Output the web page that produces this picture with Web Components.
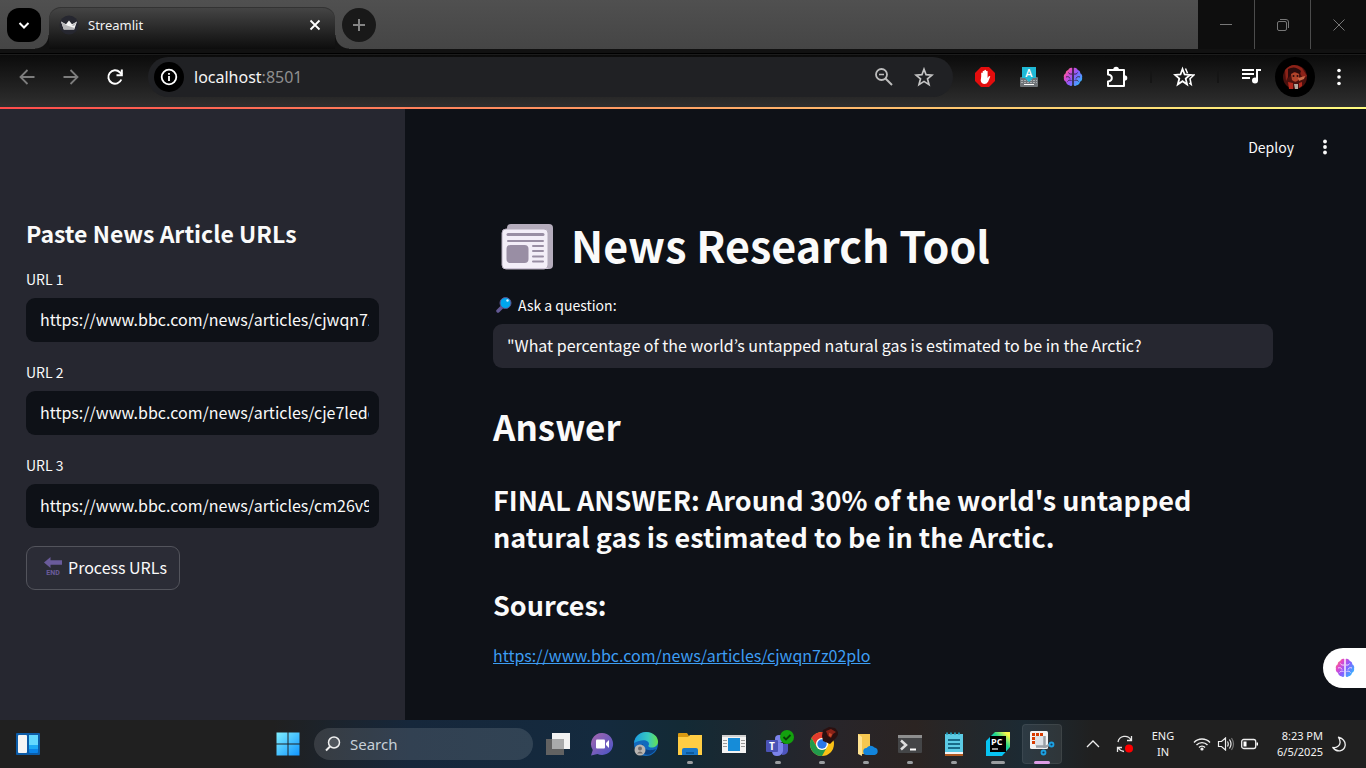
<!DOCTYPE html>
<html lang="en">
<head>
<meta charset="utf-8">
<title>Streamlit</title>
<style>
  html, body { height: 100%; margin: 0; }
  body { background: #0e1117; overflow: hidden; font-family: "Noto Sans CJK KR", sans-serif; color: #fafafa; }
</style>
</head>
<body>
<desktop-screen>
  <browser-tabs slot="tabs" label="Streamlit"></browser-tabs>
  <browser-toolbar slot="toolbar"></browser-toolbar>
  <side-panel slot="side" heading="Paste News Article URLs">
    <text-field label="URL 1" value="https://www.bbc.com/news/articles/cjwqn7z02plo"></text-field>
    <text-field label="URL 2" value="https://www.bbc.com/news/articles/cje7ledqz2qo"></text-field>
    <text-field label="URL 3" value="https://www.bbc.com/news/articles/cm26v9x3lkyo"></text-field>
    <action-button>Process URLs</action-button>
  </side-panel>
  <news-page slot="main">
    <text-field tone="light" icon="lens" label="Ask a question:" value="&quot;What percentage of the world’s untapped natural gas is estimated to be in the Arctic?"></text-field>
  </news-page>
  <task-bar slot="taskbar"></task-bar>
</desktop-screen>

<script>
const brain = `<defs><linearGradient id="b" x1="0" y1="0" x2="1" y2=".7"><stop offset="0" stop-color="#ff9a3c"/><stop offset=".3" stop-color="#e447c8"/><stop offset=".6" stop-color="#8a5cff"/><stop offset="1" stop-color="#35b4ff"/></linearGradient></defs>
<path fill="url(#b)" d="M9.300 1C7.300.300 5.800 1.500 5.300 3 3.500 3.200 2.500 4.800 2.800 6.300 1 7.200.400 9 .900 10.500 .500 12.500 1.500 14.200 3 14.800 3.200 17 5 18.200 6.300 18.200 7.500 19.500 9.300 19.200 9.300 17.500ZM10.700 1C12.700.300 14.200 1.500 14.700 3 16.500 3.200 17.500 4.800 17.200 6.300 19 7.200 19.600 9 19.100 10.500 19.500 12.500 18.500 14.200 17 14.800 16.800 17 15 18.200 13.700 18.200 12.500 19.500 10.700 19.200 10.700 17.500Z"/>
<path fill="none" stroke="var(--brain-line,#3a2a4c)" stroke-width="1" d="M5.500 5.500c.5 1.500 2 1.800 3.500 1.500M3 10c2-.8 3.500 0 4 1.500M4.500 14.500c1-1.500 2.500-1.500 4-1M14.500 5.500c-.5 1.500-2 1.800-3.500 1.500M17 10c-2-.8-3.500 0-4 1.500M15.500 14.500c-1-1.500-2.500-1.500-4-1"/>`;

/* name: [width, height, viewBox, markup] */
const ICONS = {
  chevronDown: [12, 12, '0 0 12 12', '<path fill="none" stroke="#fff" stroke-width="2" d="M1.500 4 6 8.500 10.500 4"/>'],
  crown: [20, 20, '0 0 20 20', '<circle cx="10" cy="10" r="9.500" fill="#262730"/><path fill="#f4f4f4" d="M2 6.500 7 9.200 10 5.500 13 9.200 18 6.500 15.200 14.500H4.800Z"/><path fill="#b5b5b8" d="M2 6.500 8 10.500 15.500 13 15.200 14.500H4.800ZM18 6.500 12.500 10.500 15 11Z"/>'],
  close: [12, 12, '0 0 12 12', '<path stroke="#fff" stroke-width="1.800" d="m1.500 1.500 9 9m0-9-9 9"/>'],
  plus: [14, 14, '0 0 14 14', '<path stroke="#848484" stroke-width="2" d="M7 1v12M1 7h12"/>'],
  winMin: [12, 12, '0 0 12 12', '<path stroke="#777" d="M0 5.500h12"/>'],
  winMax: [14, 14, '0 0 14 14', '<rect x="1.500" y="3.500" width="9" height="9" rx="1.500" fill="none" stroke="#777"/><path fill="none" stroke="#777" d="M4 1.500h6a2.500 2.500 0 0 1 2.500 2.500v6"/>'],
  winClose: [12, 12, '0 0 12 12', '<path stroke="#777" d="m.500.500 11 11m0-11-11 11"/>'],
  back: [18, 18, '0 0 18 18', '<path fill="none" stroke="#7d7d7d" stroke-width="1.800" d="M16.500 9H3M9.500 2 2.500 9l7 7"/>'],
  forward: [18, 18, '0 0 18 18', '<path fill="none" stroke="#7d7d7d" stroke-width="1.800" d="M1.500 9H15M8.500 2l7 7-7 7"/>'],
  reload: [18, 18, '0 0 18 18', '<path fill="none" stroke="#fff" stroke-width="2" d="M15.300 11.500A6.700 6.700 0 1 1 13.800 4.300L16 6.500"/><path fill="none" stroke="#fff" stroke-width="2" d="M15.800 1.500V7.200H10.500"/>'],
  info: [18, 18, '0 0 18 18', '<circle cx="9" cy="9" r="7.300" fill="none" stroke="#fff" stroke-width="1.800"/><path stroke="#fff" stroke-width="1.800" d="M9 8v5M9 5v1.800"/>'],
  zoomOut: [20, 20, '0 0 20 20', '<circle cx="7.500" cy="7.500" r="5.500" fill="none" stroke="#bdbdbd" stroke-width="1.800"/><path stroke="#bdbdbd" stroke-width="2" d="m11.500 11.500 6.500 6.500"/><path stroke="#bdbdbd" stroke-width="1.500" d="M5 7.500h5"/>'],
  star: [20, 20, '0 0 20 20', '<path fill="none" stroke="#c4c4c4" stroke-width="1.700" d="m10 2.200 2.100 5.500 5.900.400-4.500 3.700 1.500 5.800-5-3.200-5 3.200 1.500-5.800L2 8.100l5.900-.400Z"/>'],
  block: [20, 20, '0 0 20 20', '<path fill="#e40d0d" d="M6 0h8l6 6v8l-6 6H6l-6-6V6Z"/><path fill="#fff" d="M6.200 9.500V6q.800-1 1.500 0V4.300q.800-1 1.600 0V3.300q.900-.9 1.700 0v1q.800-1 1.600 0V11l1.200-1.800q1-.7 1.500.2l-2.200 5.300q-1.300 2.300-3.600 2.300-3.300-.3-3.800-3.500Z"/>'],
  keyboard: [20, 20, '0 0 20 20', '<rect x="1" y="10" width="18" height="10" rx="1" fill="#6f7478"/><path stroke="#a9adb0" stroke-dasharray="2 1" d="M2 13.500h16M2 15.500h16"/><path stroke="#fff" d="M5 17.500h10"/><path fill="#1fb9d5" d="M3 0h14v11h-3l-4 4-4-4H3Z"/><text x="10" y="10" text-anchor="middle" font-family="Roboto" font-size="11" font-weight="500" fill="#fff">A</text>'],
  brain: [20, 20, '0 0 20 20', brain],
  puzzle: [22, 22, '0 0 22 22', '<path fill="none" stroke="#fff" stroke-width="2" stroke-linejoin="round" d="M2 4h16v16H2v-4.500q3.800-.5 3.800-3.500T2 8.500Z"/><path fill="#fff" d="M7.300 3.500a2.800 2.800 0 0 1 5.600 0ZM18.500 9.200a2.800 2.800 0 0 1 0 5.600Z"/>'],
  stars: [22, 22, '0 0 22 22', '<path fill="none" stroke="#fff" stroke-width="1.800" d="m9.500 3 2.100 5.500 5.400.400-4.300 3.700 1.400 5.800-4.600-3.200-4.700 3.200 1.500-5.800L2 8.900l5.500-.400Z"/><path fill="none" stroke="#fff" stroke-width="1.500" d="m12.500 2.500 2 4.700M17 9h4l-4 3.700 1.200 5.800-2-1.500"/>'],
  media: [22, 20, '0 0 22 20', '<path stroke="#fff" stroke-width="2" d="M2 3h12M2 7h12M2 11h8"/><path fill="none" stroke="#fff" stroke-width="2" d="M17 14V3h4"/><circle cx="15" cy="13.500" r="3" fill="#fff"/>'],
  avatar: [24, 26, '0 0 24 26', '<circle cx="12" cy="13" r="12" fill="#4a100d"/><path fill="#8c2218" d="M2 6q8-9 17-2l5 8-4 3-3-6H7l-4 8Z"/><path fill="#2a0b0c" d="M5 5q7-4 13 2l-1 3-6-2-6 6Z"/><path fill="#b0432a" d="M8 10q4-3 8 0v5q-3 5-7 1Z"/><path fill="#c96a48" d="m15 14 7-2-1 3-5 2Z"/><path fill="#b3aaa0" d="M11 20h4v5h-3Z"/><path fill="#b3281c" d="m5 18 5 1v6H6ZM16 19l3-1v4l-3 2Z"/><circle cx="10.500" cy="12" r="1" fill="#2a0b0c"/><circle cx="14.500" cy="12" r="1" fill="#2a0b0c"/>'],
  dots: [6, 18, '0 0 6 18', '<g fill="#fff"><circle cx="3" cy="2.500" r="1.800"/><circle cx="3" cy="9" r="1.800"/><circle cx="3" cy="15.500" r="1.800"/></g>'],
  menu: [6, 16, '0 0 6 16', '<g fill="#fafafa"><circle cx="3" cy="2.500" r="1.900"/><circle cx="3" cy="8" r="1.900"/><circle cx="3" cy="13.500" r="1.900"/></g>'],
  end: [18, 20, '0 0 18 20', '<path fill="#6a5b9b" d="M0 5.500 6.500 0v3.200H18v4.500H6.500V11Z"/><text x="9" y="18" text-anchor="middle" font-family="Roboto" font-size="7" font-weight="700" fill="#6a5b9b">END</text>'],
  lens: [16, 16, '0 0 16 16', '<path stroke="#635994" stroke-width="3.500" stroke-linecap="round" d="m2 14 3.500-3.500"/><circle cx="9.500" cy="6" r="5.500" fill="#00a6ed" stroke="#5c5390" stroke-width="1"/><circle cx="11.500" cy="3.500" r="1.200" fill="#d5f3ff"/>'],
  paper: [52, 46, '0 0 52 46', '<rect x="6" y="0" width="46" height="45" rx="4" fill="#b4acbc"/><rect x="1" y="5" width="46" height="40" rx="4" fill="#f3eef8" stroke="#b4acbc"/><path stroke="#cdc4d6" d="M3 44.500h44"/><g stroke="#998ea4" stroke-linecap="round"><path stroke-width="3" d="M7 10.500h35"/><path stroke-width="2" d="M7 17h35M32 22h10M32 27h10M32 32.500h10M32 37.500h10"/></g><rect x="5.500" y="21" width="22" height="18" rx="4" fill="#998ea4"/>'],
  widgets: [24, 22, '0 0 24 22', '<rect width="24" height="22" rx="1" fill="#0c5ca8"/><rect x="2" y="2" width="9" height="18" rx="1" fill="#f5f5f5"/><rect x="13" y="2" width="9" height="18" rx="1" fill="#0a84ea"/><path fill="#63d8ff" d="M13 2h9v10h-9Z"/><path fill="#1ca9f5" d="M13 12h9v4h-9Z"/>'],
  start: [24, 24, '0 0 24 24', '<defs><linearGradient id="s" x1="0" y1="0" x2="1" y2="1"><stop stop-color="#80efff"/><stop offset="1" stop-color="#1095ff"/></linearGradient></defs><path fill="url(#s)" d="M.500.500h11v11h-11ZM12.500.500h11v11h-11ZM.500 12.500h11v11h-11ZM12.500 12.500h11v11h-11Z"/>'],
  search: [16, 16, '0 0 16 16', '<circle cx="9" cy="6.500" r="5.500" fill="#ffffff22" stroke="#f0f0f0" stroke-width="1.500"/><path stroke="#f0f0f0" stroke-width="2" d="M5 10.500 1 14.500"/>'],
  taskview: [24, 22, '0 0 24 22', '<rect y="6" width="18" height="16" fill="#626262"/><rect x="6" y="0" width="18" height="16" fill="#f2f2f2"/><rect x="6" y="6" width="12" height="10" fill="#a9aaab"/>'],
  chat: [24, 24, '0 0 24 24', '<defs><linearGradient id="c" x1="0" y1="0" x2="1" y2="1"><stop stop-color="#a665ad"/><stop offset="1" stop-color="#4654c8"/></linearGradient></defs><path fill="url(#c)" d="M12 1a11 11 0 1 1-4.500 21L1 23.500l1.800-5.500A11 11 0 0 1 12 1Z"/><rect x="6" y="7.500" width="9" height="9" rx="1" fill="#fff"/><path fill="#fff" d="m16 11 3-3v8l-3-3Z"/>'],
  edge: [24, 24, '0 0 24 24', '<defs><linearGradient id="e"><stop stop-color="#1a9be0"/><stop offset=".6" stop-color="#38c9c0"/><stop offset="1" stop-color="#66e34d"/></linearGradient></defs><circle cx="12" cy="12" r="12" fill="#1269bd"/><path fill="url(#e)" d="M0 11C1 4 6 0 12 0c7 0 12 4.500 12 9.500 0 4-3 6-6.500 6-2.500 0-4-1-2.500-3 .5-4-6-6.500-15-1.500Z"/><path fill="#0b3f80" d="M9 12c0 5 5 8 13 5-3 5-8 7-12 5-4-3-4-8-1-10Z"/><circle cx="6" cy="18" r="5.500" fill="#b9b5b2"/><circle cx="6" cy="16.500" r="2" fill="#726d6b"/><path fill="#726d6b" d="M3 21.500q3-4 6 0Z"/>'],
  folder: [24, 22, '0 0 24 22', '<path fill="#d99a12" d="M0 1q0-1 1-1h8l2 3h12v6H0Z"/><path fill="#ffcd44" d="M0 4h10l2-2h12v20H0Z"/><path fill="#1a78c8" d="M4 22v-5q0-2 2-2h12q2 0 2 2v5Z"/><path stroke="#0c5a9c" stroke-width="2" d="M8 20h8"/>'],
  window: [24, 18, '0 0 24 18', '<rect width="24" height="18" fill="#f3f3f3"/><path fill="#d0d0d0" d="M0 0h24v2H0Z"/><path stroke="#999" d="M1 5.500h4M1 8.500h4M1 11.500h4M19 5.500h4M19 8.500h4M19 11.500h4"/><rect x="6" y="3" width="12" height="13" fill="#168cd8"/>'],
  teams: [32, 32, '0 0 32 32', '<circle cx="17" cy="11" r="4" fill="#7b83eb"/><path fill="#4d55bd" d="M18 16h8v7q-1 4-6 4Z"/><path fill="#7b83eb" d="M10 15h11v8q-1 5-6 5t-5-5Z"/><rect x="4" y="12" width="12" height="12" rx="1" fill="#4a52b5"/><text x="10" y="22" text-anchor="middle" font-family="Open Sans" font-size="10" font-weight="700" fill="#fff">T</text><circle cx="25" cy="9" r="7" fill="#13a10e"/><path fill="none" stroke="#073f06" stroke-width="1.800" d="m21.500 9 2.500 2.500 4.500-4.500"/>'],
  chrome: [32, 34, '0 0 32 34', '<circle cx="16" cy="17" r="12" fill="#fbc116"/><path fill="#e33b2e" d="M5.600 11A12 12 0 0 1 26.400 11H16A6 6 0 0 0 10.500 19Z"/><path fill="#229a4c" d="M5.600 11A12 12 0 0 0 16 29l5-9A6 6 0 0 1 10.800 20Z"/><circle cx="16" cy="17" r="6" fill="#fff"/><circle cx="16" cy="17" r="4.700" fill="#2a77e8"/><path fill="#2a1010" d="m16 9 1-6 6-3 6 1 4 5-3 5-6 6-7-3Z"/><path fill="#8c2217" d="m20 4 5-2 5 3-3 2-2 4-3-2Z"/><path fill="#ca4a2a" d="m23 6 3 1-1 3-2-1Z"/>'],
  onedrive: [24, 24, '0 0 24 24', '<path fill="#f6c750" d="M4 2h12v20H4Z"/><path fill="#ffe291" d="m4 2 4 3v19l-4-2Z"/><path fill="#1285dc" d="M13 23a3.500 3.500 0 0 1-.500-7 5 5 0 0 1 8-.500 3.800 3.800 0 0 1 0 7.500Z"/>'],
  terminal: [24, 18, '0 0 24 18', '<rect width="24" height="18" rx="1" fill="#444547"/><path fill="#8e8e8e" d="M0 0h24v3H0Z"/><path fill="none" stroke="#ddd" stroke-width="2.500" d="m3 5.500 5 4.500-5 4.500"/><path stroke="#fff" stroke-width="2" d="M12 14.500h6"/>'],
  notepad: [18, 24, '0 0 18 24', '<path fill="#5ccbe5" d="M0 2h18v18H0Z"/><path stroke="#1d8fa9" stroke-width="2" stroke-dasharray="2 2" d="M1 1.500h16"/><path stroke="#186a88" stroke-width="2" d="M3 8h12M3 12h12M3 16h12"/><path fill="#f3f3f3" d="M0 20h18v2H0Z"/><path fill="#b25a20" d="M0 22h18v2H0Z"/>'],
  pycharm: [24, 24, '0 0 24 24', '<defs><linearGradient id="p" x1="0" y1="1" x2="1" y2="0"><stop offset=".45" stop-color="#07c3f2"/><stop offset=".65" stop-color="#21d789"/><stop offset=".9" stop-color="#fcf84a"/></linearGradient></defs><path fill="url(#p)" d="M9 0h15v15l-8 9H0V9Z"/><rect x="4" y="4" width="16" height="16" fill="#000"/><text x="5" y="13" font-family="Open Sans" font-size="9" font-weight="700" fill="#fff">PC</text><path stroke="#fff" stroke-width="1.200" d="M6 17h6"/>'],
  snip: [26, 26, '0 0 26 26', '<rect x="1" y="0" width="18" height="18" rx="1.500" fill="#f3f3f3"/><path fill="none" stroke="#d83b01" stroke-width="3" stroke-dasharray="3 1" d="M4.500 13V3.500H14"/><rect x="6" y="5" width="10" height="10" fill="#dde2e7"/><path fill="none" stroke="#9aa0a6" stroke-width="2.500" d="M15.500 5v12M7 15.500h10l4-2"/><g fill="#17395a" stroke="#1ba1e2" stroke-width="1.800"><circle cx="22.500" cy="13.500" r="2"/><circle cx="14.500" cy="21.500" r="2"/></g>'],
  up: [14, 8, '0 0 14 8', '<path fill="none" stroke="#eee" stroke-width="1.300" d="m1 7 6-6 6 6"/>'],
  sync: [18, 18, '0 0 18 18', '<path fill="none" stroke="#e8e8e8" stroke-width="1.300" d="M2 7A7 7 0 0 1 15 5M15.500 1v4.500H11M1.500 17v-4.500H6M2 12.500q2 3.500 6 4"/><circle cx="13" cy="13.500" r="4" fill="#f00"/>'],
  wifi: [18, 14, '0 0 18 14', '<g fill="none" stroke="#eee" stroke-width="1.400"><path d="M1 5.500a11 11 0 0 1 16 0M3.500 8a7.500 7.500 0 0 1 11 0M6 10.500a4 4 0 0 1 6 0"/></g><circle cx="9" cy="12" r="1.600" fill="#eee"/>'],
  volume: [18, 14, '0 0 18 14', '<path fill="none" stroke="#eee" stroke-width="1.200" d="M1.500 4.500h3l4-3.500v12l-4-3.500h-3ZM10.500 4.500q1.500 2.500 0 5M12.500 2.500q3 4.500 0 9"/><path fill="none" stroke="#777" stroke-width="1.200" d="M14.500 1q4 6 0 12"/>'],
  battery: [18, 12, '0 0 18 12', '<rect x=".700" y="1.500" width="14" height="9" rx="2" fill="none" stroke="#eee" stroke-width="1.300"/><path fill="#fff" d="M2.500 3.500h3v5h-3ZM15.500 4.500h1.500v3h-1.500Z"/>'],
  moon: [14, 16, '0 0 14 16', '<path fill="none" stroke="#eee" stroke-width="1.300" stroke-linejoin="round" d="M6.500 1.200Q10 7.500 6 10.200 3.500 12 .800 11.500 3.500 15.300 8 14.800q4.500-1 5.200-5.500.3-6-6.700-8.100Z"/>']
};

const define = (name, html, setup) => {
  const template = document.createElement('template');
  template.innerHTML = html;
  customElements.define(name, class extends HTMLElement {
    connectedCallback() {
      if (this.shadowRoot) return;
      this.attachShadow({ mode: 'open' }).append(template.content.cloneNode(true));
      if (setup) setup(this, this.shadowRoot);
    }
  });
};

define('ui-icon', `<style>:host{display:inline-flex;flex:none;align-items:center;justify-content:center}svg{display:block}</style>`, (host, root) => {
  const [w, h, box, art] = ICONS[host.getAttribute('name')];
  root.innerHTML += `<svg width="${w}" height="${h}" viewBox="${box}" aria-hidden="true">${art}</svg>`;
});

define('desktop-screen', `<style>
  :host{display:grid;grid-template-rows:auto auto 1fr auto;height:100vh;position:relative}
  .page{display:grid;grid-template-columns:405px 1fr;min-height:0;position:relative}
  .assist{position:absolute;right:0;bottom:32px;width:43px;height:40px;border:0;border-radius:20px 0 0 20px;background:#fff;display:flex;align-items:center;justify-content:center;padding:0;--brain-line:#f6d8ff}
</style>
<slot name="tabs"></slot><slot name="toolbar"></slot>
<div class="page"><slot name="side"></slot><slot name="main"></slot>
<button class="assist" aria-label="Assistant"><ui-icon name="brain"></ui-icon></button></div>
<slot name="taskbar"></slot>`);

define('browser-tabs', `<style>
  :host{display:flex;height:49px;background:linear-gradient(#505050,#454545);font:13px "Noto Sans","Open Sans",sans-serif}
  button{border:0;padding:0;display:flex;align-items:center;justify-content:center}
  .list{width:34px;height:34px;border-radius:12px;background:#000;margin:8px 8px 0 7px}
  .tab{position:relative;display:flex;align-items:center;box-sizing:border-box;width:286px;height:42px;margin-top:7px;padding:0 12px 6px 10px;border-radius:12px 12px 0 0;background:linear-gradient(#464646,#0d0d0d);box-shadow:inset 0 1px #333}
  .tab::before,.tab::after{content:"";position:absolute;bottom:0;width:14px;height:14px}
  .tab::before{left:-14px;background:radial-gradient(circle at 0 0,transparent 13px,#111 14px)}
  .tab::after{right:-14px;background:radial-gradient(circle at 100% 0,transparent 13px,#111 14px)}
  .title{flex:1;margin-left:9px;color:#f2f2f2}
  .tab button{width:16px;height:16px;background:none}
  .new{width:34px;height:34px;border-radius:50%;background:#191919;margin:8px 0 0 7px}
  .win{display:flex;margin-left:auto}
  .win button{box-sizing:border-box;width:56px;background:#0e0e0e}
  .win button+button{border-left:1px solid #4c4c4c}
</style>
<button class="list" aria-label="Search tabs"><ui-icon name="chevronDown"></ui-icon></button>
<div class="tab"><ui-icon name="crown"></ui-icon><span class="title"></span><button aria-label="Close tab"><ui-icon name="close"></ui-icon></button></div>
<button class="new" aria-label="New tab"><ui-icon name="plus"></ui-icon></button>
<div class="win"><button aria-label="Minimize"><ui-icon name="winMin"></ui-icon></button><button aria-label="Restore"><ui-icon name="winMax"></ui-icon></button><button aria-label="Close"><ui-icon name="winClose"></ui-icon></button></div>`,
(host, root) => { root.querySelector('.title').textContent = host.getAttribute('label'); });

define('browser-toolbar', `<style>
  :host{display:block;font:16px "Noto Sans","Open Sans",sans-serif}
  .edge{height:6px;background:linear-gradient(#111 0 4px,#000 4px 5px,#1c1c1c 5px)}
  .bar{display:flex;align-items:center;height:52px;padding:0 5px 8px 5px;box-sizing:border-box;background:linear-gradient(#0b0b0b,#2f2f2f)}
  .line{height:2px;background:linear-gradient(90deg,#ff4b4b,#fffd80)}
  button{flex:none;width:44px;height:40px;border:0;padding:0;background:none;display:flex;align-items:center;justify-content:center}
  .omni{flex:1;display:flex;align-items:center;height:40px;margin:0 10px 0 11px;padding:0 9px 0 6px;border-radius:20px;background:#202124;box-sizing:border-box}
  .omni button{width:40px}
  .omni .info{width:30px;height:30px;border-radius:50%;background:#000}
  .url{flex:1;margin-left:10px;color:#f5f5f5}
  .url span{color:#8f8f8f}
  .sep{flex:none;width:2px;height:12px;margin:0 10px 0 11px;background:#151515}
  .me ui-icon{width:40px;height:40px;border-radius:50%;background:#000}
</style>
<div class="edge"></div>
<div class="bar">
  <button aria-label="Back"><ui-icon name="back"></ui-icon></button><button aria-label="Forward"><ui-icon name="forward"></ui-icon></button><button aria-label="Reload"><ui-icon name="reload"></ui-icon></button>
  <div class="omni"><button class="info" aria-label="Site information"><ui-icon name="info"></ui-icon></button><div class="url">localhost<span>:8501</span></div>
    <button aria-label="Zoom"><ui-icon name="zoomOut"></ui-icon></button><button aria-label="Bookmark"><ui-icon name="star"></ui-icon></button></div>
  <button aria-label="Ad blocker"><ui-icon name="block"></ui-icon></button><button aria-label="Keyboard"><ui-icon name="keyboard"></ui-icon></button><button aria-label="Brain"><ui-icon name="brain"></ui-icon></button><button aria-label="Extensions"><ui-icon name="puzzle"></ui-icon></button>
  <i class="sep"></i><button aria-label="Favourites"><ui-icon name="stars"></ui-icon></button><i class="sep"></i>
  <button aria-label="Media"><ui-icon name="media"></ui-icon></button><button class="me" aria-label="Profile"><ui-icon name="avatar"></ui-icon></button><button aria-label="Menu"><ui-icon name="dots"></ui-icon></button>
</div>
<div class="line"></div>`);

define('text-field', `<style>
  :host{display:block}
  label{display:flex;align-items:center;gap:6px;height:24px;margin-bottom:7px;font-size:14px;line-height:24px;color:#fafafa}
  input{display:block;box-sizing:border-box;width:100%;height:44px;border:0;border-radius:9px;padding:0 10px 2px 14px;background:#0e1117;color:#fafafa;font:16px "Noto Sans CJK KR",sans-serif;outline:0}
  :host([tone=light]) input{background:#262730}
  :host([tone=light]) label{padding-left:3px}
</style>
<label for="f"><span></span></label><input id="f" type="text">`,
(host, root) => {
  const label = root.querySelector('label');
  root.querySelector('span').textContent = host.getAttribute('label');
  root.querySelector('input').value = host.getAttribute('value');
  if (host.hasAttribute('icon')) {
    const icon = document.createElement('ui-icon');
    icon.setAttribute('name', host.getAttribute('icon'));
    label.prepend(icon);
  }
});

define('action-button', `<style>
  :host{display:block}
  button{display:flex;align-items:center;gap:6px;height:44px;padding:0 12px 2px 17px;border:1px solid #53545c;border-radius:9px;background:#2b2c36;color:#fafafa;font:16px "Noto Sans CJK KR",sans-serif}
</style><button><ui-icon name="end"></ui-icon><slot></slot></button>`);

define('side-panel', `<style>
  :host{display:flex;flex-direction:column;gap:18px;box-sizing:border-box;padding:109px 26px 0;background:#262730}
  h2{margin:0;font-size:23px;line-height:31px;font-weight:600}
</style><h2></h2><slot></slot>`,
(host, root) => { root.querySelector('h2').textContent = host.getAttribute('heading'); });

define('news-page', `<style>
  :host{display:block;position:relative;padding:106px 93px 0 88px;background:#0e1117;min-width:0}
  header{position:absolute;top:22px;right:24px;display:flex;align-items:center;gap:14px;height:32px}
  header button{display:flex;align-items:center;justify-content:center;border:0;padding:0;background:none;color:#fafafa;font:14px/30px "Noto Sans CJK KR",sans-serif}
  header button+button{width:34px;height:32px}
  h1{display:flex;align-items:center;gap:18px;margin:0 0 20px;padding-left:8px;font-size:43px;line-height:58px;font-weight:700}
  h1 ui-icon{padding-top:6px}
  h2{margin:34px 0 31px;font-size:35px;line-height:48px;font-weight:600}
  h3{margin:0 0 31px;font-size:27px;line-height:37px;font-weight:600}
  h3.src{margin-bottom:18px}
  p{margin:0;font-size:16px;line-height:28px}
  a{color:#3d9df3}
</style>
<header><button>Deploy</button><button aria-label="Main menu"><ui-icon name="menu"></ui-icon></button></header>
<h1><ui-icon name="paper"></ui-icon>News Research Tool</h1>
<slot></slot>
<h2>Answer</h2>
<h3>FINAL ANSWER: Around 30% of the world's untapped natural gas is estimated to be in the Arctic.</h3>
<h3 class="src">Sources:</h3>
<p><a href="https://www.bbc.com/news/articles/cjwqn7z02plo">https://www.bbc.com/news/articles/cjwqn7z02plo</a></p>`);

define('task-item', `<style>
  :host{display:block;flex:none}
  button{position:relative;display:flex;align-items:center;justify-content:center;box-sizing:border-box;width:40px;height:40px;margin:0 2px;padding:0;border:0;border-radius:4px;background:none}
  button::after{content:"";position:absolute;bottom:0;width:6px;height:3px;border-radius:2px;background:transparent}
  :host([state]) button::after{background:#9a9da0}
  :host([state=open]) button::after{width:14px}
  :host([state=active]) button{background:#ffffff14;box-shadow:inset 0 0 0 1px #ffffff12}
  :host([state=active]) button::after{width:16px;background:#dc9ce6}
</style><button></button>`,
(host, root) => {
  const name = host.getAttribute('app');
  const icon = document.createElement('ui-icon');
  const button = root.querySelector('button');
  icon.setAttribute('name', name);
  button.setAttribute('aria-label', name);
  button.append(icon);
});

define('task-bar', `<style>
  :host{display:flex;align-items:center;height:48px;background:linear-gradient(90deg,#202020 0 20%,#16273b 30%,#142a3e 44%,#132a35 50%,#27252b 60%,#2b2422 67%,#1c2a33 75%,#202020 80%);font:11px "Noto Sans","Open Sans",sans-serif;color:#f3f3f3}
  .left{flex:1;padding-left:6px}
  .apps{display:flex;align-items:center}
  .search{display:flex;align-items:center;gap:9px;box-sizing:border-box;width:219px;height:32px;margin:0 3px 0 4px;padding:0 12px 0 11px;border-radius:16px;background:#ffffff1f}
  input{flex:1;min-width:0;border:0;padding:0;background:none;outline:0;color:#fff;font:15px "Noto Sans","Open Sans",sans-serif}
  input::placeholder{color:#c8d0d8;opacity:1}
  .tray{display:flex;align-items:center;padding:0 18px 0 13px}
  .tray ui-icon{width:32px}
  .tray .stat{width:24px}
  .lang{width:44px;margin-right:5px;text-align:center;line-height:16px}
  .clock{width:61px;text-align:right;line-height:16px}
  .tray .moon{margin-right:-7px}
</style>
<div class="left"><task-item app="widgets"></task-item></div>
<div class="apps">
  <task-item app="start"></task-item>
  <label class="search"><ui-icon name="search"></ui-icon><input type="search" placeholder="Search" aria-label="Search"></label>
  <task-item app="taskview"></task-item><task-item app="chat"></task-item><task-item app="edge"></task-item>
  <task-item app="folder" state="run"></task-item><task-item app="window"></task-item><task-item app="teams" state="run"></task-item>
  <task-item app="chrome" state="run"></task-item><task-item app="onedrive" state="run"></task-item><task-item app="terminal" state="run"></task-item>
  <task-item app="notepad" state="run"></task-item><task-item app="pycharm" state="open"></task-item><task-item app="snip" state="active"></task-item>
</div>
<div class="tray"><ui-icon name="up"></ui-icon><ui-icon name="sync"></ui-icon>
  <div class="lang">ENG<br>IN</div>
  <ui-icon class="stat" name="wifi"></ui-icon><ui-icon class="stat" name="volume"></ui-icon><ui-icon class="stat" name="battery"></ui-icon>
  <div class="clock">8:23 PM<br>6/5/2025</div><ui-icon class="moon" name="moon"></ui-icon></div>`);
</script>
</body>
</html>
